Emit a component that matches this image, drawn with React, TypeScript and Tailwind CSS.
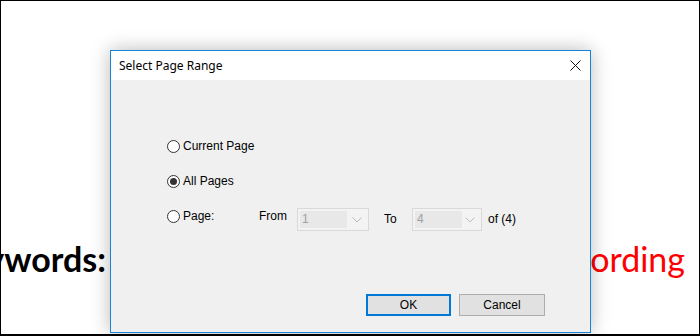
const sans = { fontFamily: '"Liberation Sans", Arial, sans-serif' };

// Win10 style radio button with label
const Radio = ({ label, checked }: { label: string; checked?: boolean }) => (
  <div className="flex items-center h-[22px]">
    <span className="flex items-center justify-center w-[13px] h-[13px] rounded-full border border-[#333333] bg-white">
      {checked && <span className="block w-[7px] h-[7px] rounded-full bg-[#333333]"></span>}
    </span>
    <span className="ml-[3px] text-[12px] text-black">{label}</span>
  </div>
);

// disabled combo box
const Combo = ({ value, width }: { value: string; width: string }) => (
  <div className={`flex items-center h-[23px] border border-[#d9d9d9] bg-[#f3f3f3] ${width}`}>
    <div className="ml-[2px] h-[17px] w-[47px] bg-[#e8e8e8] text-[12px] leading-[17px] text-[#a0a0a0] pl-[2px]">
      {value}
    </div>
    <svg className="ml-auto mr-[6px]" width="10" height="6" viewBox="0 0 10 6" fill="none">
      <path d="M0.5 0.5 L5 5 L9.5 0.5" stroke="#bcbcbc" strokeWidth="1" />
    </svg>
  </div>
);

export default function App() {
  return (
    <div className="relative w-[700px] h-[336px] overflow-hidden bg-white border border-b-2 border-black">
      {/* document behind the dialog */}
      <div className="flex items-baseline justify-between pt-[232px] pr-[14px]" style={{ fontFamily: 'Lato, "Open Sans", sans-serif' }}>
        <div className="flex justify-end w-[105px] overflow-hidden">
          <span className="whitespace-nowrap text-[34px] font-bold text-black">Keywords:</span>
        </div>
        <span className="whitespace-nowrap text-[34px] text-[#ff0000]">Screen Recording</span>
      </div>

      {/* dialog */}
      <div
        className="absolute left-[109px] top-[49px] w-[481px] h-[283px] flex flex-col border border-[#1883d7] bg-[#f0f0f0] shadow-[0_0_18px_rgba(0,0,0,0.28)]"
        style={sans}
      >
        <div className="flex items-center h-[29px] bg-white pl-[8px] pr-[9px]">
          <span className="text-[12px] text-black" style={{ fontFamily: '"Noto Sans", "Open Sans", sans-serif' }}>
            Select Page Range
          </span>
          <svg className="ml-auto" width="11" height="11" viewBox="0 0 11 11" fill="none">
            <path d="M0.5 0.5 L10.5 10.5 M10.5 0.5 L0.5 10.5" stroke="#111" strokeWidth="1" />
          </svg>
        </div>

        <div className="flex flex-col flex-1 pt-[55px] pl-[56px]">
          <Radio label="Current Page" />
          <div className="mt-[13px]">
            <Radio label="All Pages" checked />
          </div>
          <div className="mt-[13px] flex items-start">
            <div className="w-[92px]">
              <Radio label="Page:" />
            </div>
            <span className="w-[38px] h-[22px] leading-[22px] text-[12px] text-black">From</span>
            <div className="mt-[3px]">
              <Combo value="1" width="w-[72px]" />
            </div>
            <span className="ml-[15px] w-[28px] mt-[3px] h-[22px] leading-[22px] text-[12px] text-black">To</span>
            <div className="mt-[3px]">
              <Combo value="4" width="w-[70px]" />
            </div>
            <span className="ml-[6px] mt-[3px] h-[22px] leading-[22px] text-[12px] text-black">of (4)</span>
          </div>

          <div className="mt-auto mb-[16px] mr-[45px] flex justify-end gap-[8px]">
            <button className="w-[85px] h-[22px] border-2 border-[#0078d7] bg-[#e1e1e1] text-[12px] text-black">
              OK
            </button>
            <button className="w-[86px] h-[22px] border border-[#adadad] bg-[#e1e1e1] text-[12px] text-black">
              Cancel
            </button>
          </div>
        </div>
      </div>
    </div>
  );
}
